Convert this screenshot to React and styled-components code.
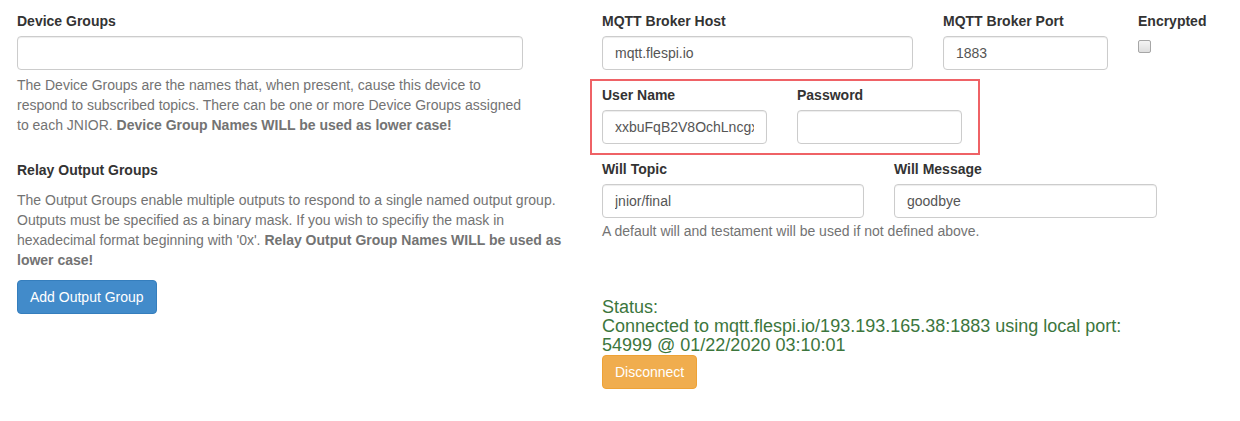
import React from "react";
import styled, { createGlobalStyle } from "styled-components";

const Global = createGlobalStyle`
  html, body { margin: 0; padding: 0; background: #fff; }
  body {
    font-family: "Liberation Sans", Arial, Helvetica, sans-serif;
    font-size: 14px;
    line-height: 20px;
    color: #333;
  }
  * { box-sizing: border-box; }
`;

const Page = styled.div`
  display: flex;
  align-items: flex-start;
  padding: 11px 0 0 17px;
`;

const LeftCol = styled.div`
  width: 560px;
  display: flex;
  flex-direction: column;
`;

const RightCol = styled.div`
  margin-left: 25px;
  display: flex;
  flex-direction: column;
  align-items: flex-start;
`;

const Label = styled.label`
  display: block;
  font-weight: bold;
  font-size: 14px;
  line-height: 20px;
  margin-bottom: 5px;
  color: #333;
`;

const SectionLabel = styled(Label)`
  margin-top: ${(p) => p.$top || 0}px;
`;

const Input = styled.input`
  display: block;
  width: ${(p) => p.$w}px;
  height: 34px;
  padding: 6px 12px;
  font-family: inherit;
  font-size: 14px;
  line-height: 20px;
  color: #555;
  background: #fff;
  border: 1px solid #ccc;
  border-radius: 4px;
  box-shadow: inset 0 1px 1px rgba(0, 0, 0, 0.075);
  outline: none;
`;

const Help = styled.p`
  margin: ${(p) => p.$top ?? 5}px 0 0;
  width: ${(p) => p.$w}px;
  color: #737373;
  font-size: 14px;
  line-height: 20px;
  b { font-weight: bold; }
`;

const Button = styled.button`
  display: inline-block;
  align-self: flex-start;
  margin-top: ${(p) => p.$top || 0}px;
  height: 34px;
  padding: 6px 12px;
  font-family: inherit;
  font-size: 14px;
  line-height: 20px;
  color: #fff;
  border-radius: 4px;
  border: 1px solid ${(p) => (p.$kind === "warning" ? "#eea236" : "#357ebd")};
  background: ${(p) => (p.$kind === "warning" ? "#f0ad4e" : "#428bca")};
  cursor: pointer;
`;

const Row = styled.div`
  display: flex;
  gap: 30px;
  margin-top: ${(p) => p.$top || 0}px;
`;

const Field = styled.div`
  display: flex;
  flex-direction: column;
`;

const Checkbox = styled.input`
  appearance: none;
  -webkit-appearance: none;
  width: 13px;
  height: 13px;
  margin: 4px 0 0;
  border: 1px solid #a6a6a6;
  border-radius: 2px;
  background: linear-gradient(#f4f4f4, #dedede);
`;

const Highlight = styled.div`
  margin: 9px 0 0 -12px;
  width: 390px;
  padding: 4px 16px 9px 10px;
  border: 2px solid #ef6266;
`;

const Status = styled.div`
  margin-top: 57px;
  font-size: 18px;
  line-height: 19px;
  color: #3c763d;
  width: 560px;
`;

export default function App() {
  return (
    <>
      <Global />
      <Page>
        <LeftCol>
          <Label>Device Groups</Label>
          <Input $w={506} readOnly defaultValue="" />
          <Help $w={510}>
            The Device Groups are the names that, when present, cause this device to
            respond to subscribed topics. There can be one or more Device Groups assigned
            to each JNIOR. <b>Device Group Names WILL be used as lower case!</b>
          </Help>

          <SectionLabel $top={25}>Relay Output Groups</SectionLabel>
          <Help $w={552}>
            The Output Groups enable multiple outputs to respond to a single named output group.
            Outputs must be specified as a binary mask. If you wish to specifiy the mask in
            hexadecimal format beginning with '0x'.{" "}
            <b>Relay Output Group Names WILL be used as lower case!</b>
          </Help>
          <Button $top={10}>Add Output Group</Button>
        </LeftCol>

        <RightCol>
          <Row>
            <Field>
              <Label>MQTT Broker Host</Label>
              <Input $w={311} readOnly defaultValue="mqtt.flespi.io" />
            </Field>
            <Field>
              <Label>MQTT Broker Port</Label>
              <Input $w={165} readOnly defaultValue="1883" />
            </Field>
            <Field>
              <Label>Encrypted</Label>
              <Checkbox type="checkbox" />
            </Field>
          </Row>

          <Highlight>
            <Row>
              <Field>
                <Label>User Name</Label>
                <Input $w={165} readOnly defaultValue="xxbuFqB2V8OchLncgxHZ7Rt0q" />
              </Field>
              <Field>
                <Label>Password</Label>
                <Input $w={165} type="password" readOnly defaultValue="" />
              </Field>
            </Row>
          </Highlight>

          <Row $top={4}>
            <Field>
              <Label>Will Topic</Label>
              <Input $w={262} readOnly defaultValue="jnior/final" />
            </Field>
            <Field>
              <Label>Will Message</Label>
              <Input $w={263} readOnly defaultValue="goodbye" />
            </Field>
          </Row>
          <Help $top={3} $w={560}>
            A default will and testament will be used if not defined above.
          </Help>

          <Status>
            Status:
            <br />
            Connected to mqtt.flespi.io/193.193.165.38:1883 using local port:
            <br />
            54999 @ 01/22/2020 03:10:01
          </Status>
          <Button $kind="warning">Disconnect</Button>
        </RightCol>
      </Page>
    </>
  );
}
